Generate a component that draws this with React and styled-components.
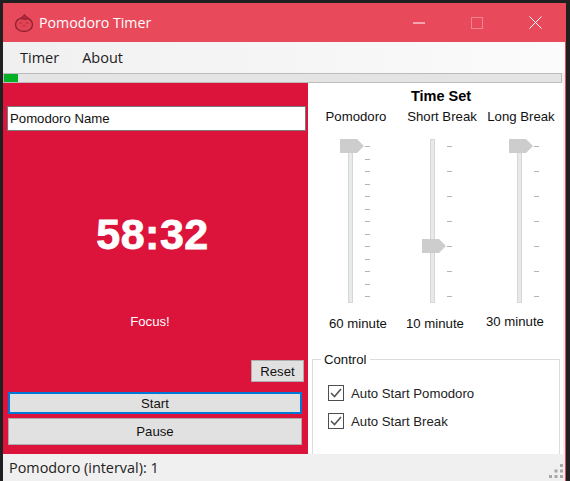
import React from 'react';
import styled, { createGlobalStyle } from 'styled-components';

const GlobalStyle = createGlobalStyle`
  html, body {
    margin: 0;
    padding: 0;
    height: 481px;
    overflow: hidden;
    background: #202020;
  }
`;

const Frame = styled.div`
  width: 570px;
  height: 481px;
  padding: 3px 0 0 3px;
  box-sizing: border-box;
  font-family: "Liberation Sans", Arial, sans-serif;
`;

const Window = styled.div`
  width: 563px;
  height: 478px;
  box-sizing: border-box;
  border-right: 1px solid #e94a5b;
  display: flex;
  flex-direction: column;
  background: #f0f0f0;
`;

const TitleBar = styled.div`
  height: 39px;
  flex: none;
  display: flex;
  align-items: center;
  background: #e94a5b;
  color: #fff;
  padding: 0 1px 0 11px;
`;

const TitleText = styled.span`
  font-family: "Open Sans", sans-serif;
  font-size: 14.2px;
  margin-left: 5px;
  flex: 1;
`;

const WinButton = styled.div`
  width: 58px;
  height: 39px;
  display: flex;
  align-items: center;
  justify-content: center;
`;

const MenuBar = styled.div`
  height: 31px;
  flex: none;
  display: flex;
  align-items: center;
  gap: 23px;
  padding-left: 17px;
  background: linear-gradient(to right, #f0f0f0, #fbfbfb);
  font-family: "Open Sans", sans-serif;
  font-size: 14.5px;
  color: #1c1c1c;
`;

const Progress = styled.div`
  height: 10px;
  flex: none;
  box-sizing: border-box;
  margin-right: 3px;
  border: 1px solid #bcbcbc;
  background: #e4e4e4;
`;

const ProgressFill = styled.div`
  height: 100%;
  background: #06b025;
`;

const Main = styled.div`
  height: 371px;
  flex: none;
  display: flex;
`;

const FocusPanel = styled.div`
  width: 305px;
  flex: none;
  display: flex;
  flex-direction: column;
  box-sizing: border-box;
  padding: 23px 3px 0 4px;
  background: #dc143c;
`;

const NameInput = styled.input`
  width: 299px;
  height: 25px;
  margin: 0;
  box-sizing: border-box;
  border: 1px solid #7a7a7a;
  padding: 0 2px;
  font-family: "Liberation Sans", Arial, sans-serif;
  font-size: 13.2px;
  color: #111;
  background: #fff;
  outline: none;
`;

const Clock = styled.div`
  margin-top: 78px;
  height: 50px;
  line-height: 50px;
  padding-right: 7px;
  text-align: center;
  font-family: "Liberation Sans", Arial, sans-serif;
  font-weight: 700;
  font-size: 43px;
  letter-spacing: 0.5px;
  -webkit-text-stroke: 0.8px #fff;
  color: #fff;
`;

const Phase = styled.div`
  margin-top: 53px;
  height: 20px;
  line-height: 20px;
  padding-right: 12px;
  text-align: center;
  font-size: 13.2px;
  color: #fff;
`;

const ResetRow = styled.div`
  margin-top: 28px;
  display: flex;
  justify-content: flex-end;
  padding-right: 1px;
`;

const Button = styled.button`
  display: block;
  box-sizing: border-box;
  width: ${({ $wide }) => ($wide ? '294px' : '53px')};
  height: ${({ $tall }) => ($tall ? '27px' : '22px')};
  margin-left: ${({ $wide }) => ($wide ? '1px' : '0')};
  padding: 0;
  border: ${({ $focused }) => ($focused ? '2px solid #0078d7' : '1px solid #adadad')};
  background: #e1e1e1;
  font-family: "Liberation Sans", Arial, sans-serif;
  font-size: 13.2px;
  color: #111;
`;

const StartButton = styled(Button)`
  margin-top: 10px;
`;

const PauseButton = styled(Button)`
  margin-top: 4px;
`;

const SettingsPanel = styled.div`
  flex: 1;
  min-width: 0;
  display: flex;
  flex-direction: column;
  background: #fff;
  margin-right: 2px;
`;

const PanelTitle = styled.div`
  height: 22px;
  line-height: 26px;
  text-align: center;
  font-weight: 700;
  font-size: 14.5px;
  color: #000;
  padding-left: 11px;
`;

const SliderRow = styled.div`
  display: flex;
  padding-left: 2px;
`;

const SliderColumn = styled.div`
  width: ${({ $width }) => $width}px;
  display: flex;
  flex-direction: column;
  align-items: center;
  flex: none;
`;

const SliderLabel = styled.div`
  height: 34px;
  line-height: 24px;
  margin-left: ${({ $shift }) => $shift}px;
  font-size: 13.2px;
  color: #111;
  white-space: nowrap;
`;

const SliderBody = styled.div`
  position: relative;
  width: 37px;
  height: 164px;
`;

const Track = styled.div`
  position: absolute;
  left: 16px;
  top: 0;
  width: 5px;
  height: 164px;
  box-sizing: border-box;
  border: 1px solid #d6d6d6;
  background: #e7eaea;
`;

const Thumb = styled.svg`
  position: absolute;
  left: 8px;
  display: block;
`;

const Ticks = styled.div`
  position: absolute;
  left: 33px;
  top: 7px;
  height: 151px;
  display: flex;
  flex-direction: column;
  justify-content: space-between;
`;

const Tick = styled.div`
  width: 5px;
  height: 1px;
  background: #b4b4b4;
`;

const SliderValue = styled.div`
  margin-top: ${({ $top }) => $top}px;
  margin-left: ${({ $shift }) => $shift}px;
  height: 20px;
  line-height: 20px;
  font-size: 13.2px;
  color: #111;
  white-space: nowrap;
`;

const ControlGroup = styled.fieldset`
  margin: 18px 3px 0 4px;
  padding: 12px 0 0 15px;
  flex: 1;
  min-height: 0;
  min-width: 0;
  border: 1px solid #dcdcdc;
  border-bottom: none;
`;

const GroupLegend = styled.legend`
  margin-left: -7px;
  padding: 0 3px 0 3px;
  font-size: 13.2px;
  color: #111;
`;

const CheckRow = styled.label`
  display: flex;
  align-items: center;
  gap: 7px;
  height: 28px;
  font-size: 13.2px;
  color: #222;
`;

const CheckBox = styled.svg`
  display: block;
  flex: none;
`;

const StatusBar = styled.div`
  flex: 1;
  display: flex;
  align-items: center;
  justify-content: space-between;
  padding: 0 2px 0 6px;
  background: #f0f0f0;
  font-family: "Open Sans", sans-serif;
  font-size: 14.4px;
  color: #222;
`;

const Grip = styled.svg`
  align-self: flex-end;
  margin-bottom: 3px;
`;

const sliders = [
  { label: 'Pomodoro', value: '60 minute', width: 81, ticks: 13, thumb: 0, labelShift: 11, valueShift: 15, top: 11 },
  { label: 'Short Break', value: '10 minute', width: 83, ticks: 7, thumb: 100, labelShift: 19, valueShift: 5, top: 11 },
  { label: 'Long Break', value: '30 minute', width: 91, ticks: 7, thumb: 0, labelShift: 3, valueShift: -9, top: 9 },
];

const TomatoIcon = () => (
  <svg width="20" height="20" viewBox="0 0 20 20" fill="none">
    <path d="M10 5.2C5 4.6 1.5 7.5 1.5 11.5c0 4 3.4 7 8.5 7s8.5-3 8.5-7c0-4-3.500-6.900-8.500-6.300z" fill="#e24455" stroke="#8e2030" strokeWidth="1.300" />
    <path d="M6 5.500c1-.7 2-1 2.500-2 .5-.9 1.500-1.600 2.500-1.800.2.800.7 1.400 1.300 1.800L15 5.500l-3.500 1L9 6z" fill="#b3283b" stroke="#8e2030" strokeWidth="1" />
    <path d="M5.500 10.500l1.300-1 1.200 1M12 10.500l1.300-1 1.200 1M8.500 12.500c.8.800 2.200.8 3 0" stroke="#a62a3c" strokeWidth="1" />
  </svg>
);

const CheckedBox = () => (
  <CheckBox width="16" height="16" viewBox="0 0 16 16" fill="none">
    <rect x="0.500" y="0.500" width="15" height="15" fill="#fff" stroke="#4d4d4d" />
    <path d="M3 8l3.500 3.500L13 4" stroke="#555" strokeWidth="1.600" />
  </CheckBox>
);

const Slider = ({ ticks, thumb }) => (
  <SliderBody>
    <Track />
    <Thumb width="24" height="14" viewBox="0 0 24 14" style={{ top: thumb }}>
      <path d="M0 0h17l7 7-7 7H0z" fill="#cdcdcd" />
    </Thumb>
    <Ticks>
      {Array.from({ length: ticks }, (_, i) => <Tick key={i} />)}
    </Ticks>
  </SliderBody>
);

const App = () => (
  <Frame>
    <GlobalStyle />
    <Window>
      <TitleBar>
        <TomatoIcon />
        <TitleText>Pomodoro Timer</TitleText>
        <WinButton>
          <svg width="12" height="2" viewBox="0 0 12 2"><path d="M0 1h12" stroke="#fff" /></svg>
        </WinButton>
        <WinButton>
          <svg width="12" height="12" viewBox="0 0 12 12" fill="none"><rect x="0.500" y="0.500" width="11" height="11" stroke="#f08490" /></svg>
        </WinButton>
        <WinButton>
          <svg width="13" height="13" viewBox="0 0 13 13" fill="none"><path d="M.5.500l12 12M12.500.500l-12 12" stroke="#fff" /></svg>
        </WinButton>
      </TitleBar>
      <MenuBar>
        <span>Timer</span>
        <span>About</span>
      </MenuBar>
      <Progress>
        <ProgressFill style={{ width: 14 }} />
      </Progress>
      <Main>
        <FocusPanel>
          <NameInput defaultValue="Pomodoro Name" />
          <Clock>58:32</Clock>
          <Phase>Focus!</Phase>
          <ResetRow>
            <Button>Reset</Button>
          </ResetRow>
          <StartButton $wide $focused>Start</StartButton>
          <PauseButton $wide $tall>Pause</PauseButton>
        </FocusPanel>
        <SettingsPanel>
          <PanelTitle>Time Set</PanelTitle>
          <SliderRow>
            {sliders.map((s) => (
              <SliderColumn key={s.label} $width={s.width}>
                <SliderLabel $shift={s.labelShift}>{s.label}</SliderLabel>
                <Slider ticks={s.ticks} thumb={s.thumb} />
                <SliderValue $top={s.top} $shift={s.valueShift}>{s.value}</SliderValue>
              </SliderColumn>
            ))}
          </SliderRow>
          <ControlGroup>
            <GroupLegend>Control</GroupLegend>
            <CheckRow><CheckedBox />Auto Start Pomodoro</CheckRow>
            <CheckRow><CheckedBox />Auto Start Break</CheckRow>
          </ControlGroup>
        </SettingsPanel>
      </Main>
      <StatusBar>
        <span>Pomodoro (interval): 1</span>
        <Grip width="14" height="14" viewBox="0 0 14 14" fill="#a8a8a8">
          <rect x="11" y="0" width="3" height="3" />
          <rect x="5.500" y="5.500" width="3" height="3" />
          <rect x="11" y="5.500" width="3" height="3" />
          <rect x="0" y="11" width="3" height="3" />
          <rect x="5.500" y="11" width="3" height="3" />
          <rect x="11" y="11" width="3" height="3" />
        </Grip>
      </StatusBar>
    </Window>
  </Frame>
);

export default App;
